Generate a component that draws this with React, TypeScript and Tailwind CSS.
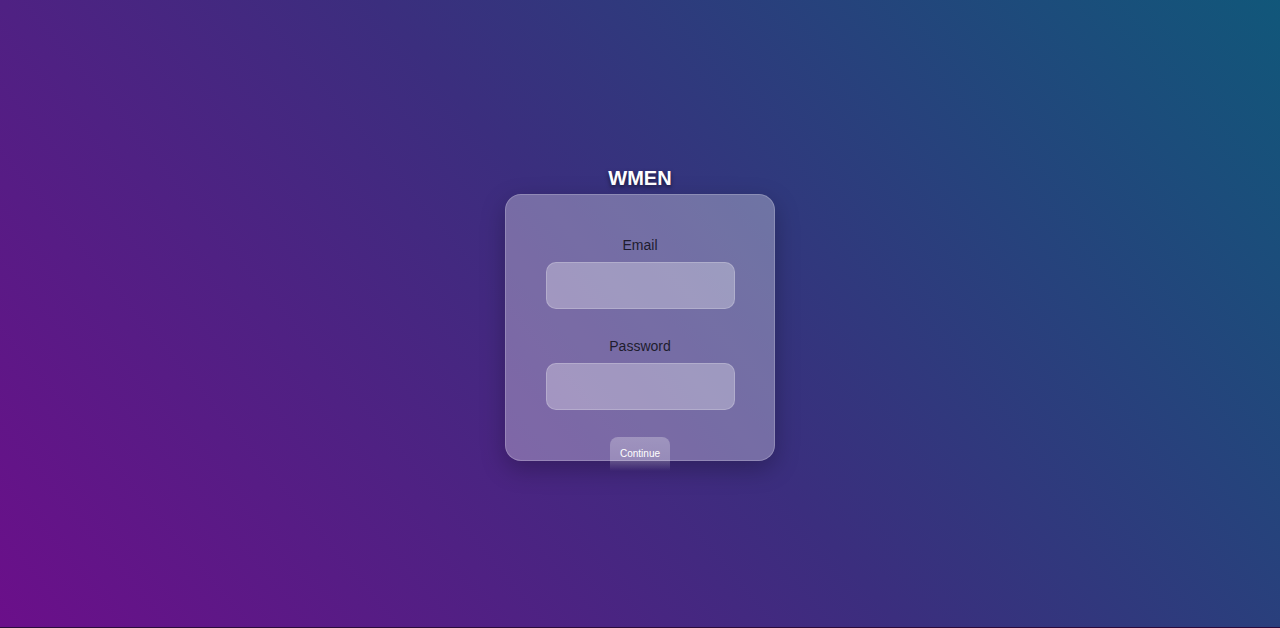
import React from "react";

const App = () => {
  return (
    <div className="w-[1280px] h-[628px] flex flex-col font-['Liberation_Sans',Arial,sans-serif]">
      <main className="flex-1 flex flex-col items-center bg-[linear-gradient(50deg,#6b0f8a_0%,#3b2e7e_50%,#11577a_100%)]">
        <h1 className="mt-[166px] text-[20px] leading-[24px] font-bold text-white [text-shadow:0_2px_4px_rgba(0,0,0,0.55)]">
          WMEN
        </h1>
        <div className="mt-[4px] w-[270px] h-[267px] flex flex-col items-center rounded-[16px] border border-white/20 bg-white/30 shadow-[0_8px_24px_rgba(0,0,0,0.25)]">
          <label className="shrink-0 mt-[42px] text-[14px] leading-[16px] text-[#1e1c2e]">Email</label>
          <input
            type="email"
            className="shrink-0 mt-[9px] w-[189px] h-[47px] rounded-[10px] border border-white/20 bg-white/30 outline-none"
          />
          <label className="shrink-0 mt-[29px] text-[14px] leading-[16px] text-[#1e1c2e]">Password</label>
          <input
            type="password"
            className="shrink-0 mt-[9px] w-[189px] h-[47px] rounded-[10px] border border-white/20 bg-white/30 outline-none"
          />
          <button className="shrink-0 mt-[27px] w-[60px] h-[34px] pt-[11px] flex justify-center items-start rounded-t-[8px] text-[10px] leading-[12px] text-white bg-[linear-gradient(to_bottom,rgba(255,255,255,0.28)_0%,rgba(255,255,255,0.22)_70%,rgba(255,255,255,0)_100%)]">
            Continue
          </button>
        </div>
      </main>
      <div className="h-px bg-[#2a0c3c]" />
    </div>
  );
};

export default App;
